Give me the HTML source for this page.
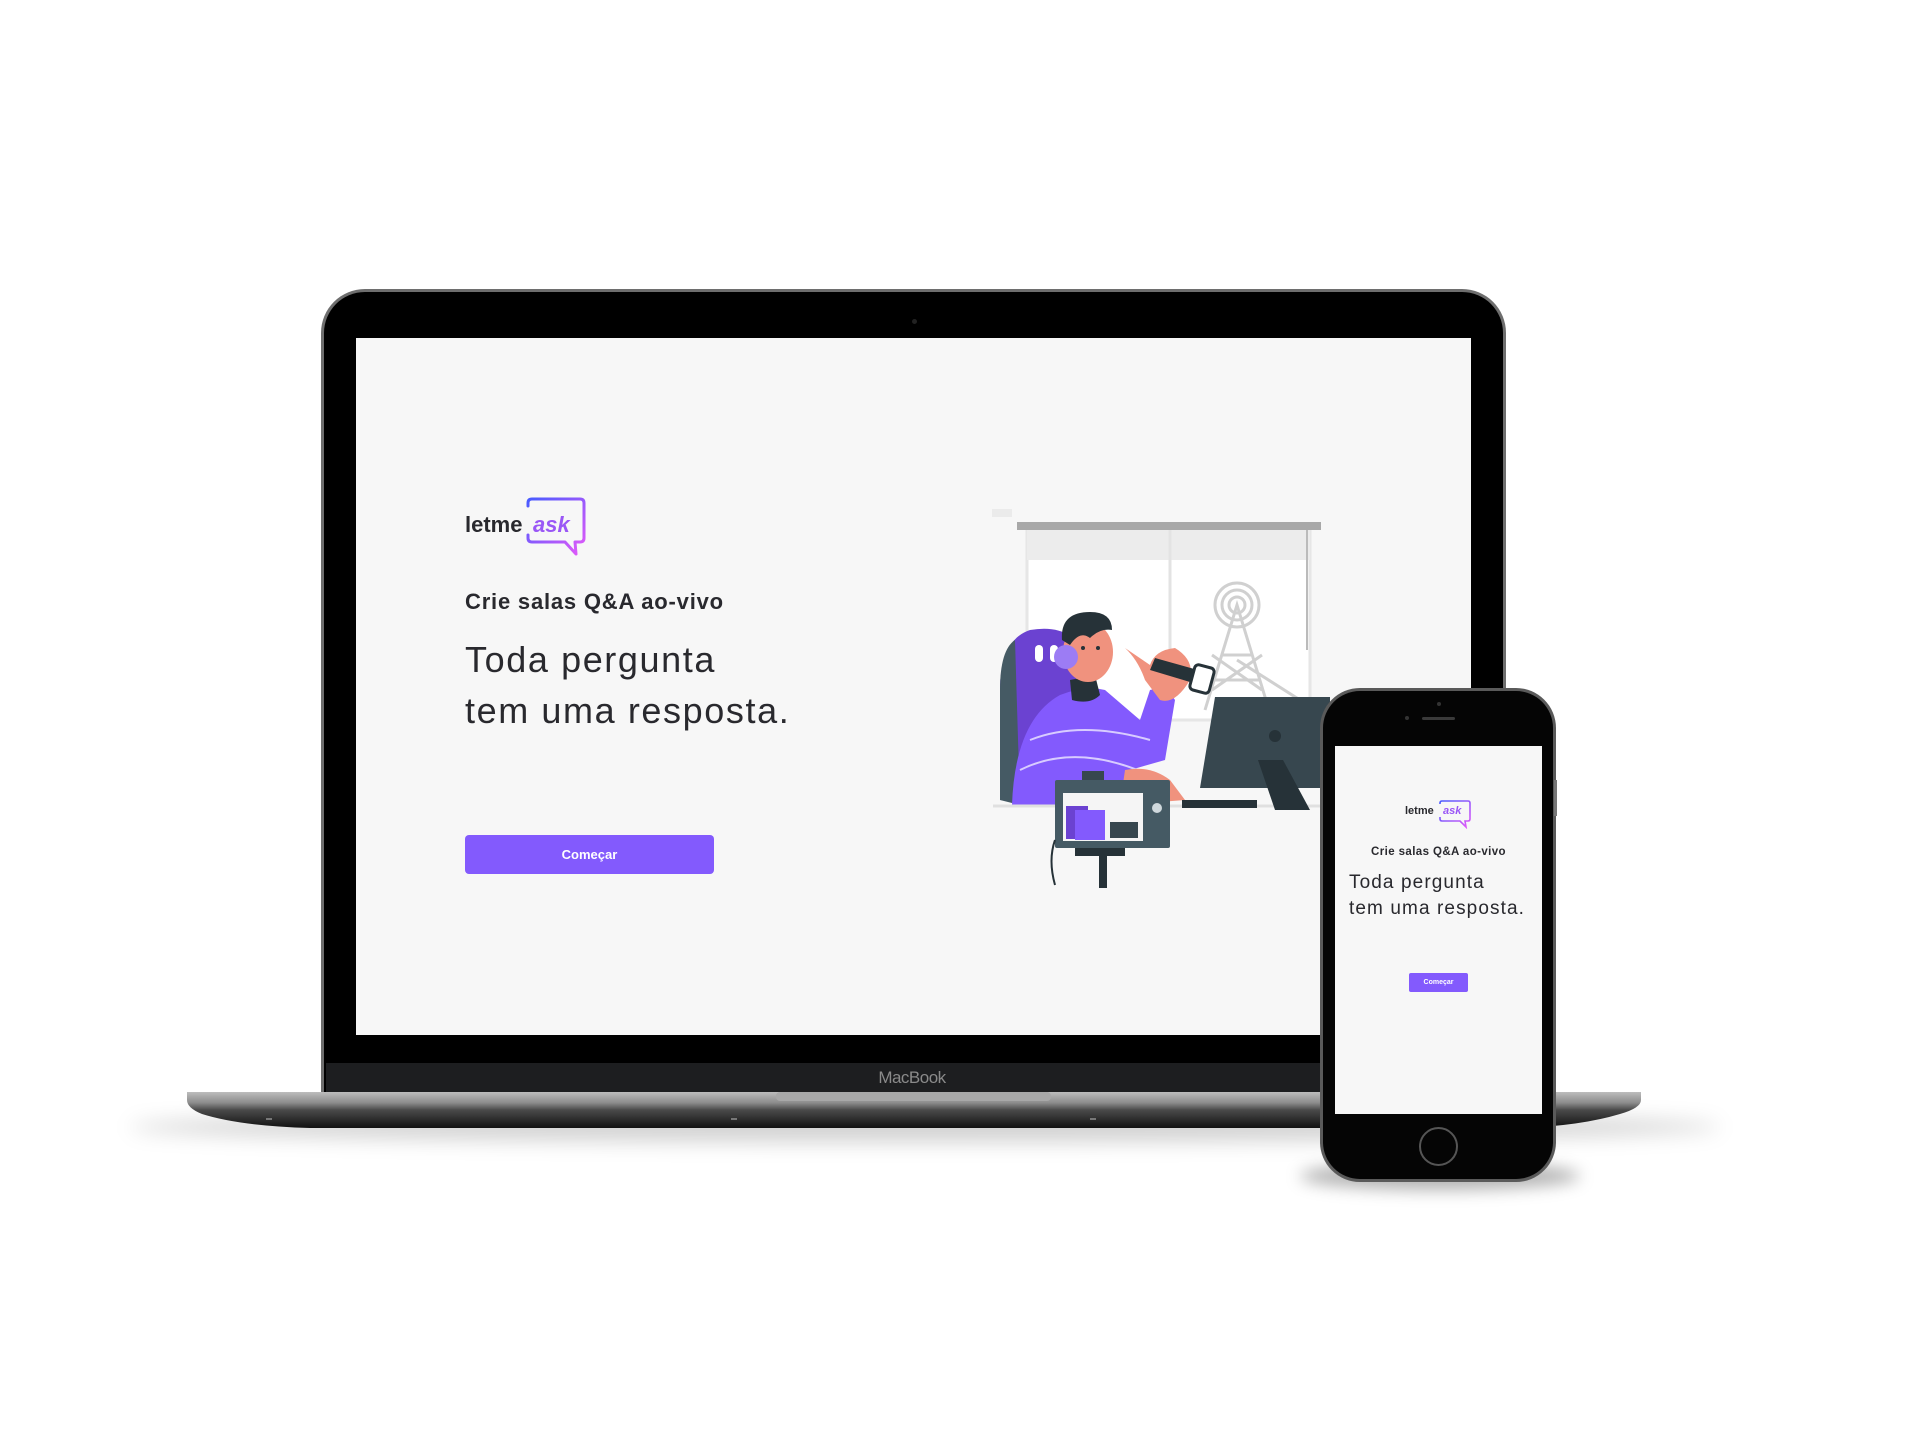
<!DOCTYPE html>
<html><head><meta charset="utf-8"><style>
html,body{margin:0;padding:0;background:#fff;}
body{width:1920px;height:1440px;position:relative;overflow:hidden;font-family:"Liberation Sans",sans-serif;}
.abs{position:absolute;}
</style></head><body>

<!-- laptop shadow -->
<div class="abs" style="left:130px;top:1112px;width:1590px;height:30px;border-radius:50%;background:rgba(0,0,0,0.18);filter:blur(10px);"></div>

<!-- laptop lid -->
<div class="abs" style="left:321px;top:289px;width:1185px;height:806px;border-radius:44px 44px 0 0;background:#6e6e6e;"></div>
<div class="abs" style="left:324px;top:292px;width:1179px;height:803px;border-radius:41px 41px 0 0;background:#000;"></div>
<div class="abs" style="left:326px;top:1063px;width:1175px;height:31px;background:#1d1e20;"></div>
<div class="abs" style="left:912px;top:319px;width:5px;height:5px;border-radius:50%;background:#222;"></div>
<div class="abs" style="left:862px;top:1068px;width:100px;text-align:center;color:#8a8a8a;font-size:17px;letter-spacing:-0.5px;">MacBook</div>

<!-- base -->
<svg class="abs" style="left:180px;top:1088px" width="1470" height="50">
<defs><linearGradient id="bg" x1="0" y1="0" x2="0" y2="1"><stop offset="0" stop-color="#bdbdbd"/><stop offset="0.3" stop-color="#8c8c8c"/><stop offset="0.5" stop-color="#4a4a4a"/><stop offset="1" stop-color="#111"/></linearGradient></defs>
<path d="M7 4 H1461 V12 Q1461 20 1440 26 Q1400 38 1340 40 H130 Q60 38 22 26 Q7 20 7 12 Z" fill="url(#bg)"/>
<rect x="596" y="4" width="275" height="9" rx="4" fill="#a8a8a8"/>
<rect x="86" y="30" width="6" height="2" fill="#777"/><rect x="551" y="30" width="6" height="2" fill="#777"/><rect x="910" y="30" width="6" height="2" fill="#777"/>
</svg>

<!-- screen -->
<div class="abs" style="left:356px;top:338px;width:1115px;height:697px;background:#f7f7f7;overflow:hidden;">
</div>

<!-- laptop content -->
<div class="abs" style="left:465px;top:512px;font-size:22px;font-weight:bold;color:#29292e;letter-spacing:0px;">letme</div>
<div class="abs" style="left:533px;top:512px;font-size:22px;font-weight:bold;font-style:italic;color:#9a57f6;letter-spacing:0px;">ask</div>
<svg class="abs" style="left:520px;top:494px" width="70" height="66">
<defs><linearGradient id="lg" x1="0" y1="0" x2="1" y2="1"><stop offset="0" stop-color="#485bff"/><stop offset="1" stop-color="#e559f9"/></linearGradient></defs>
<path d="M8 12 V9 Q8 5 12 5 H60 Q64 5 64 9 V44 Q64 48 60 48 H55 L56 60 L45 48 H12 Q8 48 8 44 V41" fill="none" stroke="url(#lg)" stroke-width="3" stroke-linejoin="round" stroke-linecap="round"/>
</svg>
<div class="abs" style="left:465px;top:589px;font-size:22px;font-weight:bold;color:#29292e;letter-spacing:0.8px;">Crie salas Q&amp;A ao-vivo</div>
<div class="abs" style="left:465px;top:634px;font-size:36px;line-height:51px;color:#29292e;letter-spacing:1.6px;">Toda pergunta<br>tem uma resposta.</div>
<div class="abs" style="left:465px;top:835px;width:249px;height:39px;border-radius:4px;background:#835afd;color:#fff;font-size:13px;font-weight:bold;text-align:center;line-height:39px;">Começar</div>

<!-- illustration -->
<svg class="abs" style="left:0;top:0" width="1920" height="1440">
<rect x="992" y="509" width="20" height="8" fill="#ebebeb"/>
<rect x="1027" y="530" width="283" height="190" fill="#fff" stroke="#e6e6e6" stroke-width="3"/>
<rect x="1027" y="530" width="283" height="30" fill="#ececec"/>
<line x1="1170" y1="530" x2="1170" y2="720" stroke="#e3e3e3" stroke-width="3"/>
<rect x="1017" y="522" width="304" height="8" fill="#a8a8a8"/>
<line x1="1307" y1="530" x2="1307" y2="650" stroke="#bbb" stroke-width="2"/>
<g fill="none" stroke="#d0d0d0" stroke-width="3">
<circle cx="1237" cy="605" r="8"/><circle cx="1237" cy="605" r="15"/><circle cx="1237" cy="605" r="22"/>
<path d="M1205 710 L1237 605 L1269 710 M1215 680 L1259 680 M1222 655 L1252 655 M1212 690 L1262 655 M1212 655 L1262 690 M1237 660 L1300 700"/>
</g>
<!-- chair -->
<path d="M1000 800 V690 Q1000 640 1030 630 Q1060 625 1075 640 L1080 805 Z" fill="#6b42d1"/>
<path d="M1000 800 V690 Q1000 650 1015 640 L1020 805 Z" fill="#455a64"/>
<rect x="1035" y="645" width="8" height="17" rx="4" fill="#fff"/><rect x="1050" y="645" width="8" height="17" rx="4" fill="#fff"/>
<!-- body -->
<path d="M1012 805 Q1015 720 1060 695 Q1085 685 1105 690 L1140 720 L1150 690 Q1165 685 1175 700 L1165 760 L1130 770 L1145 805 Z" fill="#835afd"/>
<path d="M1030 740 Q1080 720 1150 740 M1020 770 Q1080 740 1160 780" stroke="#d8ccff" stroke-width="2" fill="none"/>
<!-- head -->
<path d="M1070 680 L1072 700 Q1090 705 1100 695 L1095 675 Z" fill="#263238"/>
<ellipse cx="1088" cy="652" rx="25" ry="30" fill="#f0927e"/>
<path d="M1062 640 Q1060 612 1090 612 Q1112 612 1112 630 Q1100 628 1090 638 Q1080 630 1070 645 Z" fill="#263238"/>
<circle cx="1066" cy="657" r="12" fill="#9c7cf4"/>
<circle cx="1083" cy="648" r="2" fill="#263238"/><circle cx="1098" cy="648" r="2" fill="#263238"/>
<!-- arm & mic -->
<path d="M1125 648 Q1138 660 1145 680 L1160 700 Q1175 705 1190 680 Q1195 660 1175 648 Q1155 650 1150 665 Z" fill="#f0927e"/>
<path d="M1150 670 L1200 685 L1205 672 L1155 658 Z" fill="#263238"/>
<rect x="1192" y="666" width="20" height="26" rx="4" fill="#fff" stroke="#263238" stroke-width="3" transform="rotate(15 1202 679)"/>
<path d="M1125 770 Q1150 765 1170 780 L1185 800 L1120 805 Z" fill="#f0927e"/>
<!-- desk -->
<line x1="993" y1="806" x2="1330" y2="806" stroke="#e0e0e0" stroke-width="3"/>
<!-- monitor -->
<path d="M1215 697 H1330 V788 H1200 Z" fill="#37474f"/>
<circle cx="1275" cy="736" r="6" fill="#263238"/>
<path d="M1258 760 L1283 760 L1310 810 L1275 810 Z" fill="#263238"/>
<rect x="1182" y="800" width="75" height="8" fill="#263238"/>
<!-- camera -->
<rect x="1082" y="771" width="22" height="12" fill="#37474f"/>
<rect x="1055" y="780" width="115" height="68" rx="2" fill="#455a64"/>
<rect x="1063" y="793" width="80" height="48" fill="#f5f5f5"/>
<rect x="1066" y="806" width="22" height="33" fill="#6b42d1"/>
<rect x="1075" y="810" width="30" height="30" fill="#835afd"/>
<rect x="1110" y="822" width="28" height="16" fill="#37474f"/>
<circle cx="1157" cy="808" r="5" fill="#cfd8dc"/>
<rect x="1075" y="848" width="50" height="8" fill="#263238"/>
<rect x="1099" y="855" width="8" height="33" fill="#263238"/>
<path d="M1055 840 Q1048 860 1055 885" stroke="#263238" stroke-width="2" fill="none"/>
</svg>

<!-- phone shadow -->
<div class="abs" style="left:1300px;top:1162px;width:280px;height:28px;border-radius:50%;background:rgba(0,0,0,0.3);filter:blur(8px);"></div>
<!-- phone -->
<div class="abs" style="left:1320px;top:688px;width:236px;height:494px;border-radius:40px;background:#5a5a5a;"></div>
<div class="abs" style="left:1323px;top:691px;width:230px;height:488px;border-radius:37px;background:#050505;"></div>
<div class="abs" style="left:1554px;top:780px;width:3px;height:36px;background:#777;"></div>
<div class="abs" style="left:1437px;top:702px;width:4px;height:4px;border-radius:50%;background:#333;"></div>
<div class="abs" style="left:1405px;top:716px;width:4px;height:4px;border-radius:50%;background:#333;"></div>
<div class="abs" style="left:1422px;top:717px;width:33px;height:3px;border-radius:2px;background:#3a3a3a;"></div>
<div class="abs" style="left:1335px;top:746px;width:207px;height:368px;background:#f7f7f7;"></div>
<div class="abs" style="left:1419px;top:1127px;width:35px;height:35px;border-radius:50%;border:2px solid #555;"></div>

<!-- phone content -->
<div class="abs" style="left:1405px;top:805px;font-size:11px;font-weight:bold;color:#29292e;">letme</div>
<div class="abs" style="left:1443px;top:805px;font-size:11px;font-weight:bold;font-style:italic;color:#9a57f6;">ask</div>
<svg class="abs" style="left:1436px;top:799px" width="36" height="30">
<path d="M4 5 V4 Q4 2 6 2 H32 Q34 2 34 4 V20 Q34 22 32 22 H29 L30 28 L24 22 H6 Q4 22 4 20 V18" fill="none" stroke="url(#lg)" stroke-width="1.6"/>
</svg>
<div class="abs" style="left:1335px;top:846px;width:207px;text-align:center;font-size:11.5px;font-weight:bold;color:#29292e;letter-spacing:0.4px;">Crie salas Q&amp;A ao-vivo</div>
<div class="abs" style="left:1349px;top:870px;font-size:19px;line-height:26px;color:#29292e;letter-spacing:1.1px;">Toda pergunta<br>tem uma resposta.</div>
<div class="abs" style="left:1409px;top:973px;width:59px;height:19px;border-radius:2px;background:#835afd;color:#fff;font-size:7px;font-weight:bold;text-align:center;line-height:19px;">Começar</div>

</body></html>
